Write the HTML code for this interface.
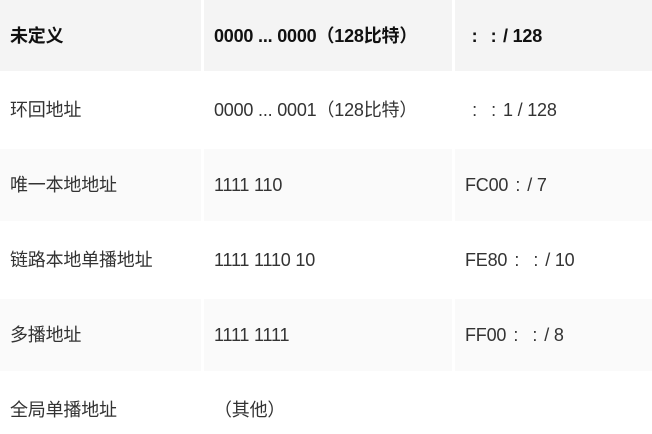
<!DOCTYPE html>
<html><head><meta charset="utf-8"><style>
html,body{margin:0;padding:0;background:#fff;width:652px;height:434px;overflow:hidden;position:relative}
body{font-family:"Liberation Sans","Noto Sans CJK SC",sans-serif;font-size:18px;color:#333;letter-spacing:-0.2px}
.r{position:absolute;left:0;width:652px}
.c{position:absolute;top:0;bottom:0;display:flex;align-items:center;white-space:nowrap;line-height:20px}
.c1{left:0;width:201px;padding-left:10px;box-sizing:border-box}
.c2{left:204px;width:248px;padding-left:10px;box-sizing:border-box}
.c3{left:455px;width:197px;padding-left:10px;box-sizing:border-box}
.g .c{background:#fafafa}
.h .c{background:#f4f4f4;font-weight:bold;color:#111}
.k{display:inline-block;width:19px;text-align:center}
</style></head><body>
<div class="r h" style="top:0;height:71px"><div class="c c1">未定义</div><div class="c c2">0000 ... 0000（128比特）</div><div class="c c3"><span class="k">:</span><span class="k">:</span>/ 128</div></div>
<div class="r" style="top:71px;height:77px"><div class="c c1">环回地址</div><div class="c c2">0000 ... 0001（128比特）</div><div class="c c3"><span class="k">:</span><span class="k">:</span>1 / 128</div></div>
<div class="r g" style="top:149px;height:72px"><div class="c c1">唯一本地地址</div><div class="c c2">1111 110</div><div class="c c3">FC00<span class="k">:</span>/ 7</div></div>
<div class="r" style="top:221px;height:78px"><div class="c c1">链路本地单播地址</div><div class="c c2">1111 1110 10</div><div class="c c3">FE80<span class="k">:</span><span class="k">:</span>/ 10</div></div>
<div class="r g" style="top:299px;height:72px"><div class="c c1">多播地址</div><div class="c c2">1111 1111</div><div class="c c3">FF00<span class="k">:</span><span class="k">:</span>/ 8</div></div>
<div class="r" style="top:371px;height:63px"><div class="c c1" style="align-items:flex-start;padding-top:29px">全局单播地址</div><div class="c c2" style="align-items:flex-start;padding-top:29px">（其他）</div></div>
</body></html>
